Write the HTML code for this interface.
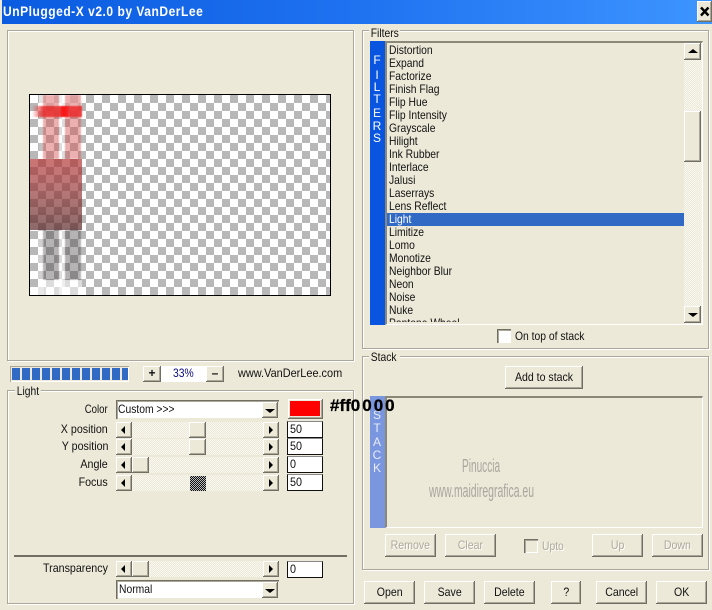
<!DOCTYPE html>
<html><head><meta charset="utf-8"><style>
html,body{margin:0;padding:0}
body{width:712px;height:610px;position:relative;overflow:hidden;background:#ece9d8;font:12px "Liberation Sans",sans-serif;color:#111}
div,span{position:absolute;box-sizing:border-box}
.title{left:2px;top:0;width:710px;height:24px;background:linear-gradient(90deg,#0a5be0,#1f72f0 50%,#3d95ff)}
.ttxt{left:3px;top:3px;color:#fff;font:bold 14px "Liberation Sans",sans-serif;white-space:nowrap;transform:scaleX(.86);transform-origin:left;letter-spacing:.6px;line-height:17px}
.btn{background:#ece9d8;box-shadow:inset -1px -1px #716f64,inset 1px 1px #fff,inset -2px -2px #aca899;text-align:center;white-space:nowrap}
.group{border:1px solid #aca899;box-shadow:inset 1px 1px #fff,1px 1px #fff}
.leg{background:#ece9d8;padding:0 2px;line-height:13px;height:13px}
.t{white-space:nowrap;transform:scaleX(.86);transform-origin:left;line-height:13px;height:13px}
.r{white-space:nowrap;transform:scaleX(.89);transform-origin:right;line-height:13px;height:13px;text-align:right;right:604px}
.dis{color:#aca899;text-shadow:1px 1px #fff}
.b{line-height:23px}
.b span{position:static;display:inline-block;transform:scaleX(.88)}
.combo{background:#fff;box-shadow:inset 1px 1px #716f64,inset 2px 2px #aca899,inset -1px -1px #ece9d8}
.track{background-color:#f1efe4;background-image:conic-gradient(#f8f7f0 25%,#ece9d8 0 50%,#f8f7f0 0 75%,#ece9d8 0);background-size:2px 2px}
.edit{background:#fff;border:1px solid #111;border-top-color:#888;width:36px;height:17px;line-height:15px;padding-left:2px}
.edit span{position:static;display:inline-block;transform:scaleX(.9);transform-origin:left}
.al,.ar,.au,.ad{width:0;height:0;border-style:solid;border-color:transparent}
.al{border-width:4px 4px 4px 0;border-right-color:#000}
.ar{border-width:4px 0 4px 4px;border-left-color:#000}
.au{border-width:0 5px 4px 5px;border-bottom-color:#000}
.ad{border-width:4px 5px 0 5px;border-top-color:#000}
.check{background-color:#fff;background-image:conic-gradient(#b8b8b8 25%,#fff 0 50%,#b8b8b8 0 75%,#fff 0);background-size:16px 16px;background-position:0 0}
.li{left:389px;white-space:nowrap;transform:scaleX(.86);transform-origin:left;line-height:13px;height:13px}
.vl{color:#fff;width:16px;text-align:center;line-height:13px;height:13px;font-size:12px}
.seg{top:368px;width:8px;height:12px;background:#316ac5}
.cb{width:14px;height:14px;box-shadow:inset 1px 1px #716f64,inset 2px 2px #aca899,inset -1px -1px #fff}
</style></head><body>
<div class="title"></div>
<div class="ttxt">UnPlugged-X v2.0 by VanDerLee</div>
<div class="btn" style="left:697px;top:1px;width:15px;height:21px"></div>
<svg style="position:absolute;left:699px;top:6px" width="12" height="11"><path d="M2 1.5L9.5 9.5M9.5 1.5L2 9.5" stroke="#000" stroke-width="2.4"/></svg>

<!-- preview -->
<div class="group" style="left:7px;top:30px;width:347px;height:331px"></div>
<div class="check" style="left:29px;top:94px;width:302px;height:202px;border:1px solid #000;overflow:hidden">
  <div style="left:29px;top:0;width:6px;height:64px;background:rgba(255,255,255,.5)"></div>
  <div style="left:9px;top:0;width:5px;height:64px;background:rgba(255,255,255,.15)"></div>
  <div style="left:9px;top:0;width:43px;height:11px;background:rgba(255,255,255,.55)"></div>
  <div style="left:13px;top:0;width:16px;height:64px;background:rgba(215,80,80,.45);filter:blur(.6px)"></div>
  <div style="left:35px;top:0;width:16px;height:64px;background:rgba(215,80,80,.45);filter:blur(.6px)"></div>
  <div style="left:2px;top:11px;width:50px;height:11px;background:linear-gradient(90deg,rgba(235,50,50,0),rgba(232,50,50,.9) 22%,rgba(230,50,50,.9) 55%,#f81818 60%,#f81818 68%,rgba(235,50,50,.9) 75%);filter:blur(.4px)"></div>
  <div style="left:0;top:64px;width:52px;height:71px;background:linear-gradient(180deg,rgba(180,50,50,.68),rgba(150,55,55,.68) 45%,rgba(85,35,35,.68))"></div>
  <div style="left:29px;top:135px;width:6px;height:65px;background:rgba(255,255,255,.5)"></div>
  <div style="left:8px;top:135px;width:6px;height:65px;background:rgba(255,255,255,.35)"></div>
  <div style="left:13px;top:135px;width:16px;height:50px;background:rgba(70,65,65,.4);filter:blur(.6px)"></div>
  <div style="left:35px;top:135px;width:16px;height:50px;background:rgba(70,65,65,.4);filter:blur(.6px)"></div>
  <div style="left:8px;top:185px;width:44px;height:15px;background:rgba(255,255,255,.5)"></div>
</div>

<!-- progress -->
<div style="left:10px;top:366px;width:119px;height:16px;box-shadow:inset 1px 1px #aca899,inset -1px -1px #fff"></div>
<div class="seg" style="left:12px"></div><div class="seg" style="left:22px"></div><div class="seg" style="left:32px"></div><div class="seg" style="left:42px"></div><div class="seg" style="left:52px"></div><div class="seg" style="left:62px"></div><div class="seg" style="left:72px"></div><div class="seg" style="left:82px"></div><div class="seg" style="left:92px"></div><div class="seg" style="left:102px"></div><div class="seg" style="left:112px"></div><div class="seg" style="left:122px;width:6px"></div>
<div class="btn" style="left:143px;top:366px;width:18px;height:16px;font:bold 12px/15px 'Liberation Sans',sans-serif">+</div>
<div style="left:161px;top:366px;width:45px;height:16px;background:#fff"></div>
<div class="t" style="left:173px;top:367px;color:#0a0a80">33%</div>
<div class="btn" style="left:206px;top:366px;width:18px;height:16px;font:bold 12px/15px 'Liberation Sans',sans-serif">–</div>
<div class="t" style="left:238px;top:367px;transform:scaleX(.91)">www.VanDerLee.com</div>

<!-- Light -->
<div class="group" style="left:7px;top:390px;width:347px;height:214px"></div>
<div class="leg t" style="left:15px;top:385px;width:30px">Light</div>
<div class="r" style="top:403px;transform:scaleX(.8)">Color</div>
<div class="combo" style="left:116px;top:400px;width:163px;height:19px"></div>
<div class="t" style="left:118px;top:403px">Custom &gt;&gt;&gt;</div>
<div class="btn" style="left:262px;top:402px;width:16px;height:16px"></div><div class="ad" style="left:265px;top:409px"></div>
<div class="btn" style="left:288px;top:399px;width:35px;height:20px"></div>
<div style="left:290px;top:401px;width:30px;height:15px;background:#f00"></div>
<div style="left:330px;top:396px;font:bold 17px/19px 'Liberation Sans',sans-serif;color:#000;white-space:nowrap;z-index:5;-webkit-text-stroke:.3px #000">#ff<span style="position:static;letter-spacing:2px">0000</span></div>

<div class="r" style="top:423px">X position</div>
<div class="track" style="left:116px;top:422px;width:163px;height:16px"></div>
<div class="btn" style="left:116px;top:422px;width:16px;height:16px"></div><div class="al" style="left:121px;top:426px"></div>
<div class="btn" style="left:189px;top:422px;width:17px;height:16px"></div>
<div class="btn" style="left:263px;top:422px;width:16px;height:16px"></div><div class="ar" style="left:269px;top:426px"></div>
<div class="edit" style="left:287px;top:421px"><span>50</span></div>

<div class="r" style="top:440px">Y position</div>
<div class="track" style="left:116px;top:439px;width:163px;height:16px"></div>
<div class="btn" style="left:116px;top:439px;width:16px;height:16px"></div><div class="al" style="left:121px;top:443px"></div>
<div class="btn" style="left:189px;top:439px;width:17px;height:16px"></div>
<div class="btn" style="left:263px;top:439px;width:16px;height:16px"></div><div class="ar" style="left:269px;top:443px"></div>
<div class="edit" style="left:287px;top:438px"><span>50</span></div>

<div class="r" style="top:458px">Angle</div>
<div class="track" style="left:116px;top:457px;width:163px;height:16px"></div>
<div class="btn" style="left:116px;top:457px;width:16px;height:16px"></div><div class="al" style="left:121px;top:461px"></div>
<div class="btn" style="left:132px;top:457px;width:17px;height:16px"></div>
<div class="btn" style="left:263px;top:457px;width:16px;height:16px"></div><div class="ar" style="left:269px;top:461px"></div>
<div class="edit" style="left:287px;top:456px"><span>0</span></div>

<div class="r" style="top:476px">Focus</div>
<div class="track" style="left:116px;top:475px;width:163px;height:16px"></div>
<div class="btn" style="left:116px;top:475px;width:16px;height:16px"></div><div class="al" style="left:121px;top:479px"></div>
<div style="left:190px;top:476px;width:16px;height:15px;background-color:#444;background-image:conic-gradient(#111 25%,#bbb 0 50%,#111 0 75%,#bbb 0);background-size:2px 2px"></div>
<div class="btn" style="left:263px;top:475px;width:16px;height:16px"></div><div class="ar" style="left:269px;top:479px"></div>
<div class="edit" style="left:287px;top:474px"><span>50</span></div>

<div style="left:14px;top:555px;width:333px;height:2px;background:#716f64"></div>
<div class="r" style="top:562px">Transparency</div>
<div class="track" style="left:116px;top:561px;width:163px;height:16px"></div>
<div class="btn" style="left:116px;top:561px;width:16px;height:16px"></div><div class="al" style="left:121px;top:565px"></div>
<div class="btn" style="left:132px;top:561px;width:17px;height:16px"></div>
<div class="btn" style="left:263px;top:561px;width:16px;height:16px"></div><div class="ar" style="left:269px;top:565px"></div>
<div class="edit" style="left:287px;top:561px"><span>0</span></div>
<div class="combo" style="left:116px;top:580px;width:163px;height:19px"></div>
<div class="t" style="left:119px;top:583px">Normal</div>
<div class="btn" style="left:262px;top:582px;width:16px;height:16px"></div><div class="ad" style="left:265px;top:589px"></div>

<!-- Filters -->
<div class="group" style="left:362px;top:30px;width:347px;height:319px"></div>
<div class="leg t" style="left:369px;top:27px;width:36px">Filters</div>
<div style="left:370px;top:41px;width:15px;height:284px;background:#0a55e0"></div>
<div class="vl" style="left:369px;top:54px">F</div><div class="vl" style="left:369px;top:69px">I</div><div class="vl" style="left:369px;top:81px">L</div><div class="vl" style="left:369px;top:93px">T</div><div class="vl" style="left:369px;top:107px">E</div><div class="vl" style="left:369px;top:120px">R</div><div class="vl" style="left:369px;top:132px">S</div>
<div style="left:385px;top:41px;width:318px;height:284px;border-top:2px solid #8a8878;border-left:2px solid #8a8878;border-right:1px solid #fff;border-bottom:1px solid #fff;overflow:hidden">
  <div style="left:0;top:170px;width:297px;height:13px;background:#316ac5"></div>
  <div class="li" style="left:2px;top:1px">Distortion</div>
  <div class="li" style="left:2px;top:14px">Expand</div>
  <div class="li" style="left:2px;top:27px">Factorize</div>
  <div class="li" style="left:2px;top:40px">Finish Flag</div>
  <div class="li" style="left:2px;top:53px">Flip Hue</div>
  <div class="li" style="left:2px;top:66px">Flip Intensity</div>
  <div class="li" style="left:2px;top:79px">Grayscale</div>
  <div class="li" style="left:2px;top:92px">Hilight</div>
  <div class="li" style="left:2px;top:105px">Ink Rubber</div>
  <div class="li" style="left:2px;top:118px">Interlace</div>
  <div class="li" style="left:2px;top:131px">Jalusi</div>
  <div class="li" style="left:2px;top:144px">Laserrays</div>
  <div class="li" style="left:2px;top:157px">Lens Reflect</div>
  <div class="li" style="left:2px;top:170px;color:#fff">Light</div>
  <div class="li" style="left:2px;top:183px">Limitize</div>
  <div class="li" style="left:2px;top:196px">Lomo</div>
  <div class="li" style="left:2px;top:209px">Monotize</div>
  <div class="li" style="left:2px;top:222px">Neighbor Blur</div>
  <div class="li" style="left:2px;top:235px">Neon</div>
  <div class="li" style="left:2px;top:248px">Noise</div>
  <div class="li" style="left:2px;top:261px">Nuke</div>
  <div class="li" style="left:2px;top:274px">Pantone Wheel</div>
  <div style="left:0;top:279px;width:297px;height:3px;background:#ece9d8"></div>
  <div class="track" style="left:297px;top:0;width:18px;height:281px"></div>
  <div class="btn" style="left:297px;top:0;width:17px;height:17px"></div><div class="au" style="left:301px;top:6px"></div>
  <div class="btn" style="left:297px;top:68px;width:17px;height:51px"></div>
  <div class="btn" style="left:297px;top:263px;width:17px;height:17px"></div><div class="ad" style="left:301px;top:270px"></div>
</div>
<div class="cb" style="left:497px;top:329px;background:#fff"></div>
<div class="t" style="left:515px;top:330px">On top of stack</div>

<!-- Stack -->
<div class="group" style="left:362px;top:356px;width:347px;height:214px"></div>
<div class="leg t" style="left:369px;top:351px;width:36px">Stack</div>
<div class="btn b" style="left:505px;top:366px;width:78px;height:23px"><span>Add to stack</span></div>
<div style="left:370px;top:396px;width:15px;height:132px;background:#7a96df"></div>
<div style="left:385px;top:396px;width:318px;height:132px;border-top:2px solid #8a8878;border-left:2px solid #8a8878;border-right:1px solid #fff;border-bottom:1px solid #fff"></div>
<div class="vl" style="left:369px;top:409px;color:#e8ecf8">S</div><div class="vl" style="left:369px;top:422px;color:#e8ecf8">T</div><div class="vl" style="left:369px;top:436px;color:#e8ecf8">A</div><div class="vl" style="left:369px;top:449px;color:#e8ecf8">C</div><div class="vl" style="left:369px;top:462px;color:#e8ecf8">K</div>
<div style="left:462px;top:456px;font-size:18px;line-height:20px;color:#a9a79d;white-space:nowrap;transform:scaleX(.56);transform-origin:left">Pinuccia</div>
<div style="left:429px;top:481px;font-size:18px;line-height:20px;color:#a9a79d;white-space:nowrap;transform:scaleX(.58);transform-origin:left">www.maidiregrafica.eu</div>

<div class="btn b dis" style="left:385px;top:534px;width:51px;height:23px"><span>Remove</span></div>
<div class="btn b dis" style="left:445px;top:534px;width:51px;height:23px"><span>Clear</span></div>
<div class="cb" style="left:524px;top:539px"></div>
<div class="t dis" style="left:542px;top:540px">Upto</div>
<div class="btn b dis" style="left:592px;top:534px;width:51px;height:23px"><span>Up</span></div>
<div class="btn b dis" style="left:652px;top:534px;width:51px;height:23px"><span>Down</span></div>

<div class="btn b" style="left:364px;top:581px;width:51px;height:23px"><span>Open</span></div>
<div class="btn b" style="left:424px;top:581px;width:51px;height:23px"><span>Save</span></div>
<div class="btn b" style="left:484px;top:581px;width:51px;height:23px"><span>Delete</span></div>
<div class="btn b" style="left:551px;top:581px;width:30px;height:23px"><span>?</span></div>
<div class="btn b" style="left:596px;top:581px;width:51px;height:23px"><span>Cancel</span></div>
<div class="btn b" style="left:656px;top:581px;width:51px;height:23px"><span>OK</span></div>
</body></html>
